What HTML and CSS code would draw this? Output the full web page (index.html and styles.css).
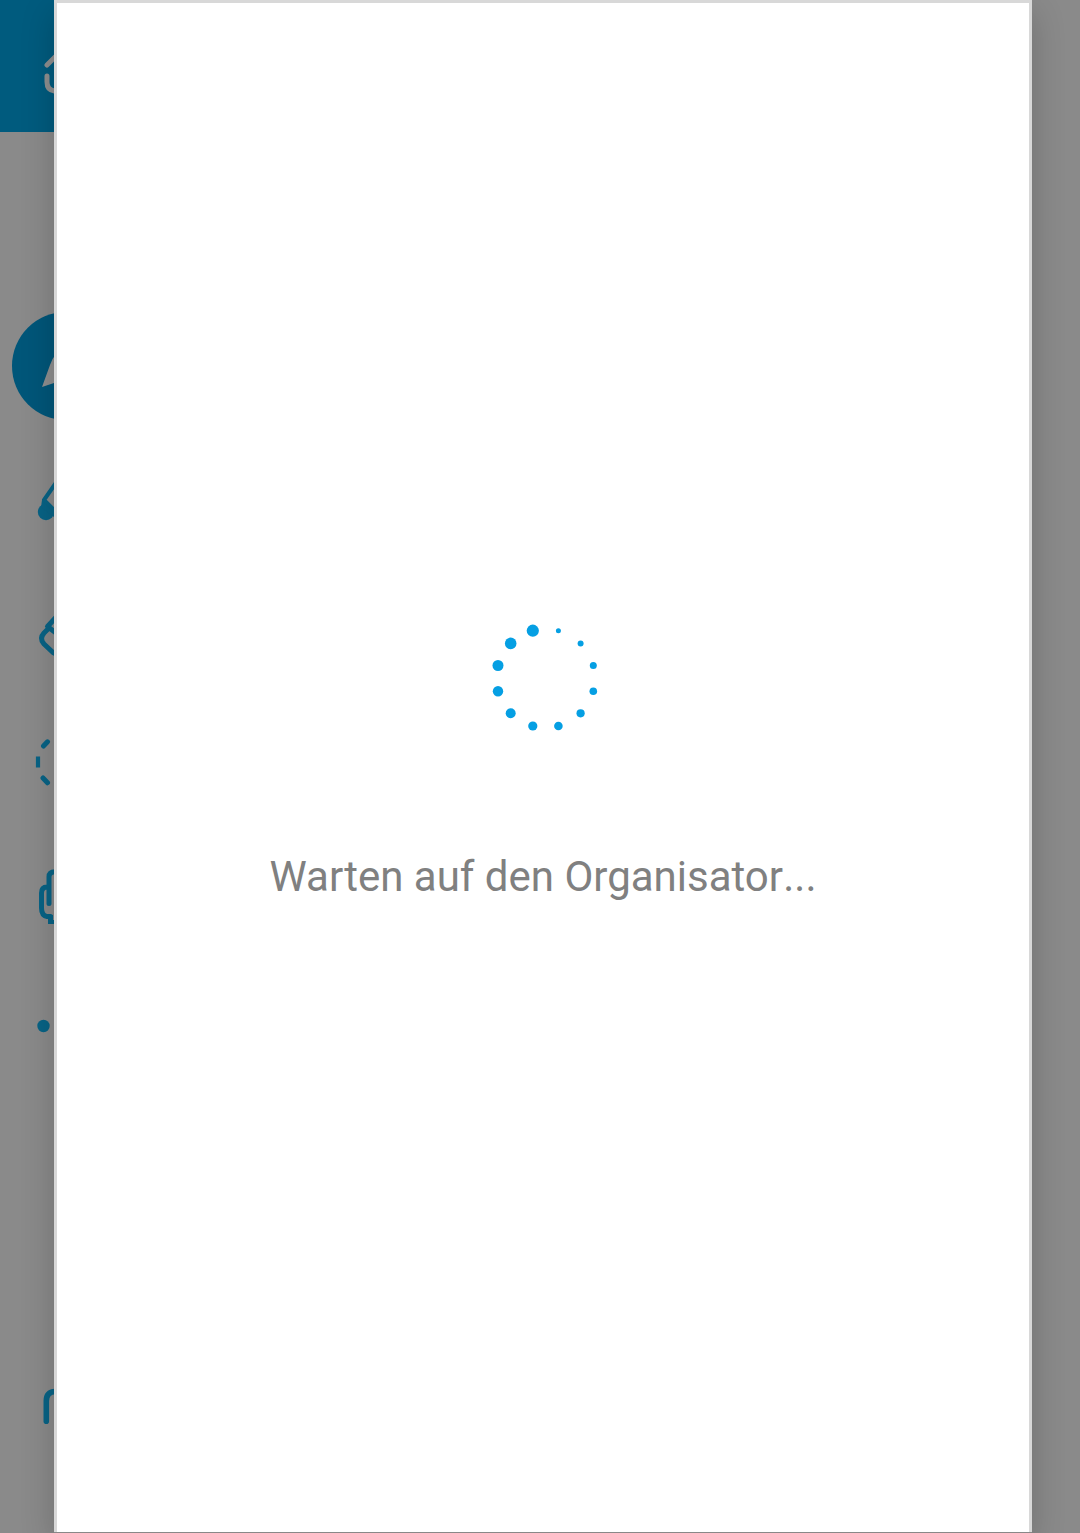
FILE: index.html
```html
<!DOCTYPE html>
<html lang="de">
<head>
<meta charset="utf-8">
<title>Whiteboard</title>
<link rel="stylesheet" href="styles.css">
</head>
<body>
<div class="app">
  <header class="topbar">
    <svg class="icon home" viewBox="0 0 132 132"><path d="M47 65L66 46L85 65M47 76V82Q47 91 56 91H76Q85 91 85 82V76"/></svg>
  </header>
  <nav class="tools">
    <svg class="icon" viewBox="0 0 132 132"><circle class="active" cx="66" cy="66" r="54"/><path class="arrow" d="M42 87L50 65Q52.5 58 56 54L66 36L90 87L66 79Z"/></svg>
    <svg class="icon" viewBox="0 0 132 132"><circle class="solid" cx="46" cy="80" r="8.2"/><path class="solid" d="M42 68L54 79V85L41 75Z"/><path d="M60 45L44 68L54 78" stroke-width="4"/></svg>
    <svg class="icon" viewBox="0 0 132 132"><path d="M60 49L47.5 62.5L60 72M49 64L44 69Q39 74.5 44 80L53 88.5L60 92"/></svg>
    <svg class="icon dashes" viewBox="0 0 132 132"><path d="M43.5 50L47.5 45.8M43 82L47.5 86.8"/><path class="square" d="M38 60.5V71.5"/></svg>
    <svg class="icon" viewBox="0 0 132 132"><path d="M49 75.5V49Q49 43.8 55 43.8H60M49 59H47Q41.5 59 41.5 65V80Q41.5 87.5 47 88.5H50.5"/><path class="solid" d="M48 87H53V92H60V96H48Z"/></svg>
    <svg class="icon" viewBox="0 0 132 132"><circle class="solid" cx="43.5" cy="66" r="6.2"/></svg>
  </nav>
  <footer class="actions">
    <svg class="icon undo" viewBox="0 0 132 132"><path d="M46.3 81.3V61Q46.3 52 55 51.5H66"/></svg>
  </footer>
</div>
<main class="dialog">
  <svg class="spinner" viewBox="0 0 130 130">
    <circle cx="78.4" cy="18.7" r="2.5"/><circle cx="100.6" cy="31.4" r="3"/>
    <circle cx="113.3" cy="53.5" r="3.5"/><circle cx="113.3" cy="79.2" r="3.8"/>
    <circle cx="100.6" cy="101.3" r="4.1"/><circle cx="78.4" cy="114" r="4.3"/>
    <circle cx="52.8" cy="114" r="4.6"/><circle cx="30.7" cy="101.3" r="5"/>
    <circle cx="18" cy="79.2" r="5.2"/><circle cx="18" cy="53.5" r="5.5"/>
    <circle cx="30.7" cy="31.4" r="5.8"/><circle cx="52.8" cy="18.7" r="6.1"/>
  </svg>
  <p class="message">Warten auf den Organisator<span class="dots">...</span></p>
</main>
</body>
</html>
```
FILE: styles.css
```css
* { box-sizing: border-box; }
body {
  margin: 0;
  height: 1533px;
  position: relative;
  overflow: hidden;
  background: #8a8a8a;
  font-family: Roboto, sans-serif;
}
.app { display: flex; flex-direction: column; height: 1533px; }
.topbar { width: 54px; height: 132px; background: #005b7e; overflow: hidden; }
.tools { display: flex; flex-direction: column; padding-top: 168px; }
.actions { margin-top: auto; padding-bottom: 61px; }
.icon {
  display: block;
  width: 132px;
  height: 132px;
  fill: none;
  stroke: #086385;
  stroke-width: 5;
  stroke-linecap: round;
  stroke-linejoin: round;
}
.home { stroke: #8f8f8f; stroke-width: 5; }
.dashes { stroke-width: 5; }
.undo { stroke-width: 5.6; }
.active { fill: #005679; stroke: none; }
.arrow { fill: #8f8f8f; stroke: none; }
.solid { fill: #086385; stroke: none; }
.square { stroke-linecap: butt; stroke-width: 4.2; }
.dialog {
  position: absolute;
  inset: 0 48px 1px 54px;
  display: flex;
  flex-direction: column;
  align-items: center;
  padding-top: 609px;
  background: #fff;
  border: solid #d8d8d8;
  border-width: 3px 3px 0;
  box-shadow: 0 1px 0 #888, 0 12px 32px rgba(0, 0, 0, .2);
}
.spinner { width: 130px; height: 130px; margin-left: 4px; fill: #059fe3; }
.message {
  margin: 110px 0 0;
  font-size: 42px;
  line-height: 50px;
  color: #808080;
  white-space: nowrap;
}
.dots { margin-left: .2px; }
```
